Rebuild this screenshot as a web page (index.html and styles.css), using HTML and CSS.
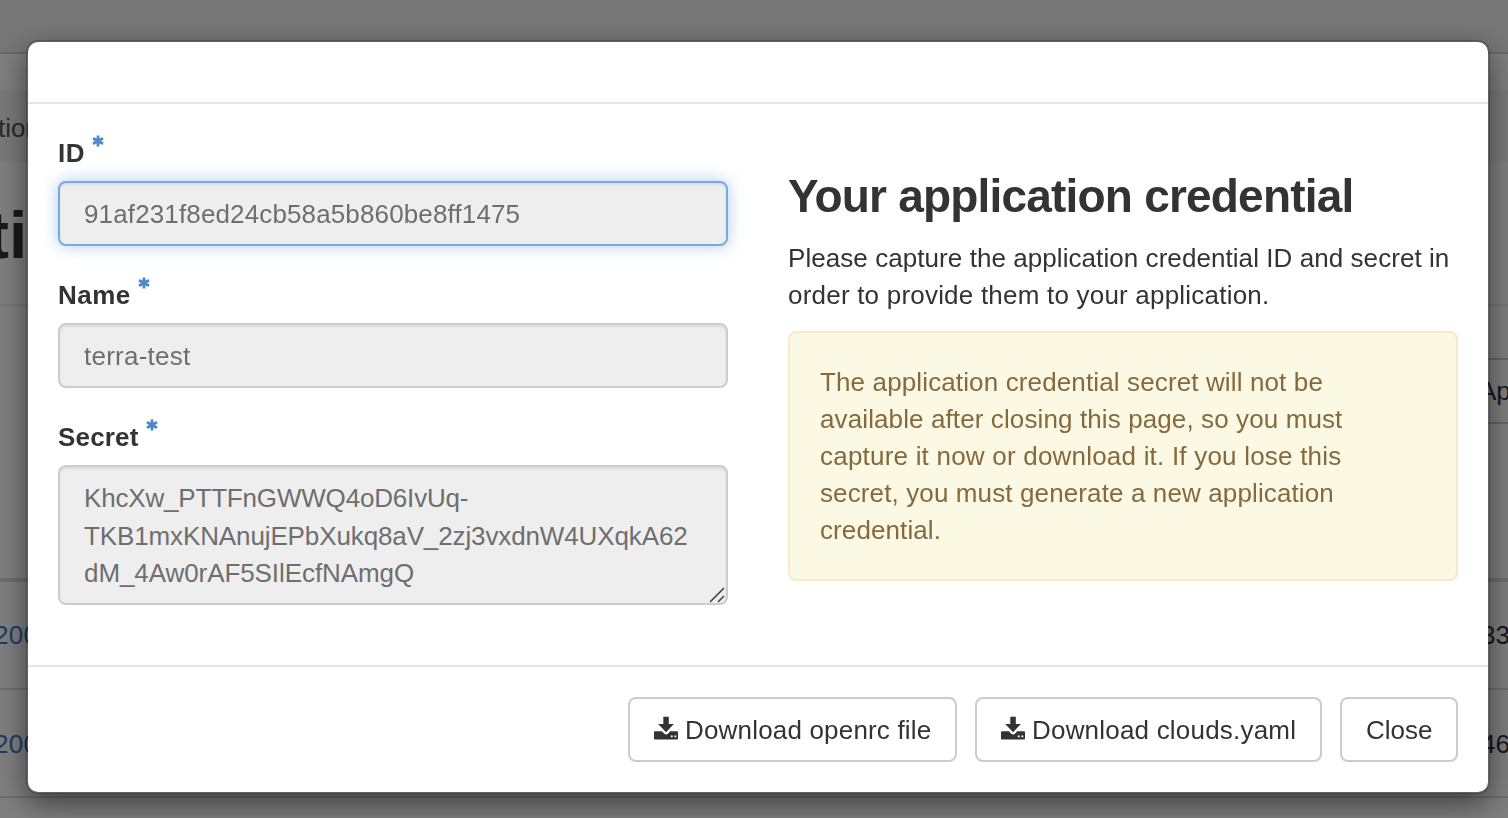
FILE: index.html
```
<!DOCTYPE html>
<html lang="en">
<head>
<meta charset="utf-8">
<title>Your application credential</title>
<link rel="stylesheet" href="styles.css">
</head>
<body>
<div class="page">
  <div class="topbar"></div>
  <div class="spacer"></div>
  <div class="breadcrumb"><span class="crumb">tion</span></div>
  <div class="page-title"><span class="title-text">ti</span></div>
  <div class="toolbar"><div class="filter">Ap</div></div>
  <div class="row"><a class="row-link">200</a><span class="row-end">33</span></div>
  <div class="row row-last"><a class="row-link">200</a><span class="row-end">46</span></div>
</div>
<div class="backdrop">
  <div class="modal">
    <div class="modal-header"></div>
    <div class="modal-body">
      <form class="form">
        <div class="group">
          <label class="label"><span class="t-id">ID</span><svg class="star" viewBox="0 0 12 12"><path d="M6 .4v11.2M1 3.2l10 5.6M11 3.2L1 8.8"/></svg></label>
          <div class="control focused"><span class="v-id">91af231f8ed24cb58a5b860be8ff1475</span></div>
        </div>
        <div class="group">
          <label class="label"><span class="t-name">Name</span><svg class="star" viewBox="0 0 12 12"><path d="M6 .4v11.2M1 3.2l10 5.6M11 3.2L1 8.8"/></svg></label>
          <div class="control"><span class="v-name">terra-test</span></div>
        </div>
        <div class="group">
          <label class="label"><span class="t-secret">Secret</span><svg class="star" viewBox="0 0 12 12"><path d="M6 .4v11.2M1 3.2l10 5.6M11 3.2L1 8.8"/></svg></label>
          <div class="control area"><span class="s1">KhcXw_PTTFnGWWQ4oD6IvUq-</span><span class="s2">TKB1mxKNAnujEPbXukq8aV_2zj3vxdnW4UXqkA62</span><span class="s3">dM_4Aw0rAF5SIlEcfNAmgQ</span>
            <svg class="grip" viewBox="0 0 16 16"><path d="M1 15L15 1M9 15l6-6"/></svg></div>
        </div>
      </form>
      <div class="info">
        <h3 class="heading">Your application credential</h3>
        <p class="lead"><span class="p1">Please capture the application credential ID and secret in</span><span class="p2">order to provide them to your application.</span></p>
        <div class="alert"><span class="a1">The application credential secret will not be</span><span class="a2">available after closing this page, so you must</span><span class="a3">capture it now or download it. If you lose this</span><span class="a4">secret, you must generate a new application</span><span class="a5">credential.</span></div>
      </div>
    </div>
    <div class="modal-footer">
      <a class="btn btn-openrc"><svg class="dl" viewBox="0 0 24 24"><path fill-rule="evenodd" d="M9.300 .7h5.500v7.300h5L12.100 16.300 4.200 8h5.100zM1 15.200h7l2.300 2.500q1.800 1.500 3.600 0l2.300-2.500H23q1 0 1 1v6.400q0 1-1 1H1q-1 0-1-1v-6.400q0-1 1-1zM16.800 19.400v1.800h1.900v-1.800zM20.400 19.400v1.800h1.900v-1.800z"/></svg><span class="b1">Download openrc file</span></a>
      <a class="btn btn-clouds"><svg class="dl" viewBox="0 0 24 24"><path fill-rule="evenodd" d="M9.300 .7h5.500v7.300h5L12.100 16.300 4.200 8h5.100zM1 15.200h7l2.300 2.500q1.800 1.500 3.600 0l2.300-2.500H23q1 0 1 1v6.400q0 1-1 1H1q-1 0-1-1v-6.400q0-1 1-1zM16.800 19.400v1.800h1.900v-1.800zM20.400 19.400v1.800h1.900v-1.800z"/></svg><span class="b2">Download clouds.yaml</span></a>
      <a class="btn btn-close"><span class="b3">Close</span></a>
    </div>
  </div>
</div>
</body>
</html>
```
FILE: styles.css
```
* { box-sizing: border-box; }
body { margin: 0; height: 818px; overflow: hidden; background: #fff; color: #333;
  font: 26px/37px "Liberation Sans", Arial, sans-serif; }
.page { height: 818px; overflow: hidden; }
.topbar { height: 54px; background: #efefef; border-bottom: 2px solid #d2d2d2; }
.spacer { height: 36px; }
.breadcrumb { height: 72px; background: #f5f5f5; padding-top: 20px; color: #555; }
.crumb { margin-left: -2px; }
.page-title { height: 144px; border-bottom: 2px solid #eee; padding-top: 38px; font-size: 66px; line-height: 70px; font-weight: bold; }
.title-text { margin-left: -13px; }
.toolbar { height: 276px; padding-top: 52px; border-bottom: 4px solid #ddd; display: flex; justify-content: flex-end; }
.filter { width: 100px; height: 66px; border: 2px solid #ccc; border-right: 0; padding: 13px 0 0 69px; white-space: nowrap; }
.row { height: 108px; border-bottom: 2px solid #ddd; display: flex; justify-content: space-between; align-items: center; }
.row-last { padding-top: 2px; }
.row-link { color: #337ac8; margin-left: -6px; letter-spacing: .3px; }
.row-end { margin-right: -2px; }
.backdrop { position: fixed; inset: 0; background: rgba(0,0,0,.5); padding: 40px 18px 0 26px; }
.modal { width: 1464px; height: 754px; background: #fff; background-clip: padding-box; border: 2px solid rgba(0,0,0,.2);
  border-radius: 12px; box-shadow: 0 10px 30px rgba(0,0,0,.5); display: flex; flex-direction: column; }
.modal-header { height: 62px; border-bottom: 2px solid #e5e5e5; }
.modal-body { flex: 1; display: flex; gap: 60px; padding: 30px 30px 0; }
.form, .info { width: 670px; }
.group { margin-bottom: 30px; }
.label { display: flex; height: 47px; font-weight: bold; }
.label span { white-space: nowrap; line-height: 38px; }
.star { width: 12px; height: 12px; margin: 1px 0 0 7px; fill: none; stroke: #4f88c9; stroke-width: 2.8; }
.control { height: 65px; background: #eee; border: 2px solid #ccc; border-radius: 8px; padding: 13px 24px; color: #6e6e6e;
  box-shadow: inset 0 2px 2px rgba(0,0,0,.075); white-space: nowrap; }
.focused { border-color: #75a9e5; box-shadow: inset 0 2px 2px rgba(0,0,0,.075), 0 0 16px rgba(117,169,229,.6); }
.area { height: 140px; position: relative; line-height: 37.5px; }
.area > span, .lead span, .alert span { display: block; white-space: nowrap; }
.grip { position: absolute; right: 1px; bottom: 0; width: 16px; height: 16px; fill: none; stroke: #444; stroke-width: 1.6; }
.heading { margin: 36px 0 18px; font-size: 46px; line-height: 52px; white-space: nowrap; letter-spacing: -.8px; }
.lead { margin: 0 0 17px; }
.alert { height: 250px; padding: 31px 30px; border: 2px solid #f6e9cc; border-radius: 8px; background: #fbf8e4; color: #86693d; }
.modal-footer { height: 127px; border-top: 2px solid #e5e5e5; padding: 30px 30px 0; display: flex; justify-content: flex-end; }
.btn { height: 65px; border: 2px solid #ccc; border-radius: 8px; display: flex; padding: 13px 0 0 24px; white-space: nowrap; }
.btn-openrc { width: 329px; margin-right: 18px; }
.btn-clouds { width: 347px; margin-right: 18px; }
.btn-close { width: 118px; }
.dl { width: 24px; height: 24px; margin: 4px 7px 0 0; fill: #333; }

/* Per-line tracking */
.t-id { letter-spacing: .5px; }
.t-name { letter-spacing: .5px; }
.t-secret { letter-spacing: .17px; }
.v-id { letter-spacing: .135px; }
.v-name { letter-spacing: .25px; }
.s1 { letter-spacing: -.18px; }
.s2 { letter-spacing: -.12px; }
.s3 { letter-spacing: -.08px; }
.p1 { letter-spacing: .065px; }
.p2 { letter-spacing: .21px; }
.a1 { letter-spacing: .13px; }
.a2 { letter-spacing: .11px; }
.a3 { letter-spacing: .21px; }
.a4 { letter-spacing: .12px; }
.a5 { letter-spacing: .1px; }
.b1 { letter-spacing: .18px; }
.b2 { letter-spacing: .2px; }
```
